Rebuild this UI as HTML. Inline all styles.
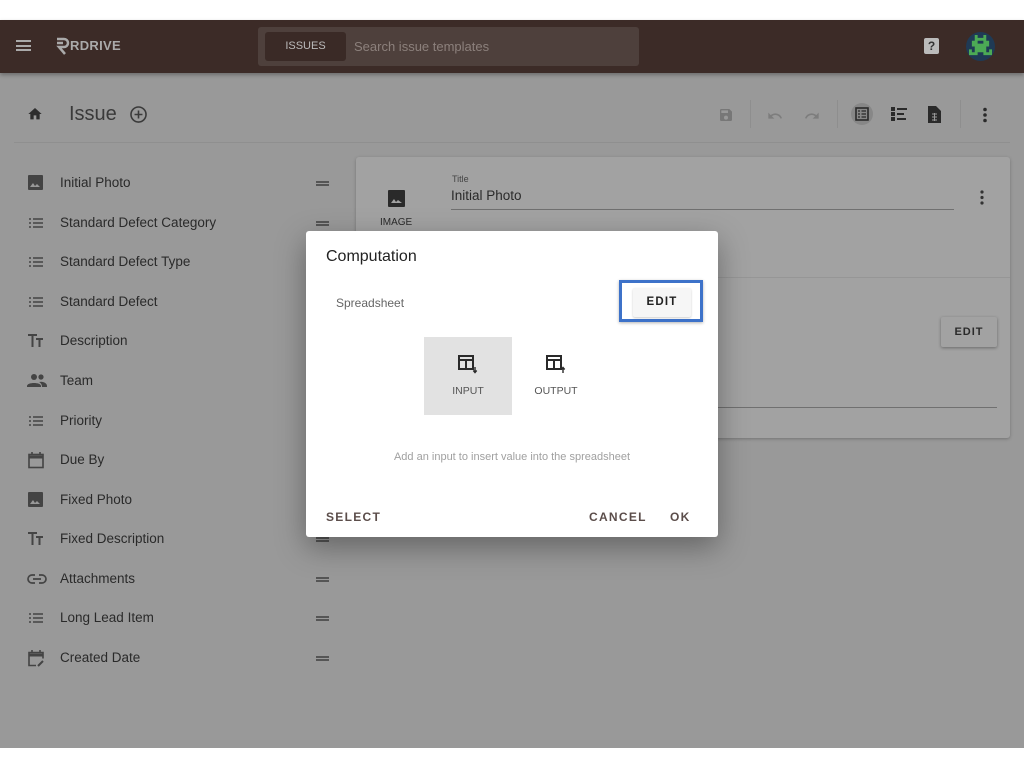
<!DOCTYPE html>
<html><head><meta charset="utf-8"><style>
*{box-sizing:border-box;margin:0;padding:0}
body{width:1024px;height:768px;background:#fff;font-family:"Liberation Sans",sans-serif;position:relative;overflow:hidden}
.page{position:absolute;left:0;top:20px;width:1024px;height:728px;background:#999}
.hdr{position:absolute;left:0;top:0;width:1024px;height:53px;background:#3c2b27;box-shadow:0 2px 4px rgba(0,0,0,.3)}
.abs{position:absolute}
.item{position:absolute;left:0;height:40px;width:340px}
.item .t{position:absolute;left:60px;top:0;font-size:13.5px;color:#2a2a2a;line-height:16px}
.item svg{position:absolute;left:27px;top:0}
.item .h{position:absolute;left:316px;top:6px;width:13px;height:5px;border-top:2px solid #555;border-bottom:2px solid #555}
.dlg{position:absolute;left:306px;top:211px;width:412px;height:306px;background:#fff;border-radius:3px;box-shadow:0 10px 30px rgba(0,0,0,.35)}
.btn{font-size:12px;letter-spacing:1.3px;color:#4a3a37;position:absolute;font-weight:bold;opacity:.9}
</style></head><body>
<div class="page">
 <div class="hdr">
  <div class="abs" style="left:16px;top:20px;width:15px;height:11px;border-top:2px solid #aaa;border-bottom:2px solid #aaa"><div style="margin-top:2.5px;height:2px;background:#aaa"></div></div>
  <svg class="abs" style="left:55px;top:16px" width="16" height="20" viewBox="0 0 16 20"><path d="M2 3h7a4 4 0 0 1 0 8H4l6 7" stroke="#aaa" stroke-width="2.5" fill="none"/><path d="M2 7h6" stroke="#aaa" stroke-width="2.5"/></svg>
  <div class="abs" style="left:70px;top:18px;font-size:13px;color:#aaa;font-weight:bold;letter-spacing:.3px">RDRIVE</div>
  <div class="abs" style="left:258px;top:7px;width:381px;height:39px;background:#4e403c;border-radius:3px"></div>
  <div class="abs" style="left:265px;top:12px;width:81px;height:29px;background:#3a2a26;border-radius:3px;color:#bbb;font-size:11px;text-align:center;line-height:29px">ISSUES</div>
  <div class="abs" style="left:354px;top:19px;font-size:13px;color:#8c807c">Search issue templates</div>
  <div class="abs" style="left:924px;top:18px;width:15px;height:16px;background:#bbb;border-radius:2px;font-size:12px;color:#333;text-align:center;line-height:16px;font-weight:bold">?</div>
  <div class="abs" style="left:966px;top:12px;width:29px;height:29px;border-radius:50%;background:#1f3a55"></div>
  <svg class="abs" style="left:969px;top:15px" width="23" height="23" viewBox="0 0 8 8"><path d="M2 0h1v1H2zM5 0h1v1H5zM2 1h4v1H2zM1 2h2v2H1zM5 2h2v2H5zM3 3h2v1H3zM2 4h4v2H2zM0 5h1v2H0zM7 5h1v2H7zM1 6h2v1H1zM5 6h2v1H5z" fill="#4caa55"/></svg>
 </div>
 <svg class="abs" style="left:27px;top:86px" width="16" height="16" viewBox="0 0 24 24"><path d="M10 20v-6h4v6h5v-8h3L12 3 2 12h3v8z" fill="#2e2e2e"/></svg>
 <div class="abs" style="left:69px;top:83px;font-size:20px;color:#3a3a3a">Issue</div>
 <svg class="abs" style="left:129px;top:85px" width="19" height="19" viewBox="0 0 24 24"><circle cx="12" cy="12" r="9.5" stroke="#3a3a3a" stroke-width="2" fill="none"/><path d="M12 7v10M7 12h10" stroke="#3a3a3a" stroke-width="2"/></svg>
 <div class="abs" style="left:14px;top:122px;width:996px;height:1px;background:#8f8f8f"></div>
 <svg class="abs" style="left:718px;top:87px" width="16" height="16" viewBox="0 0 24 24"><path d="M17 3H5a2 2 0 0 0-2 2v14a2 2 0 0 0 2 2h14a2 2 0 0 0 2-2V7zm-5 16a3 3 0 1 1 0-6 3 3 0 0 1 0 6zm3-10H5V5h10z" fill="#777"/></svg>
 <div class="abs" style="left:750px;top:80px;width:1px;height:28px;background:#8e8e8e"></div>
 <svg class="abs" style="left:766px;top:88px" width="18" height="16" viewBox="0 0 24 24"><path d="M12.5 8c-2.6 0-5 1-6.9 2.6L2 7v9h9l-3.6-3.6A8 8 0 0 1 20.2 16l2.4-.8A10.5 10.5 0 0 0 12.5 8z" fill="#7d7d7d"/></svg>
 <svg class="abs" style="left:803px;top:88px" width="18" height="16" viewBox="0 0 24 24"><path d="M11.5 8c2.6 0 5 1 6.9 2.6L22 7v9h-9l3.6-3.6A8 8 0 0 0 3.8 16l-2.4-.8A10.5 10.5 0 0 1 11.5 8z" fill="#7d7d7d"/></svg>
 <div class="abs" style="left:837px;top:80px;width:1px;height:28px;background:#8e8e8e"></div>
 <div class="abs" style="left:851px;top:83px;width:22px;height:22px;border-radius:50%;background:#878787"></div>
 <svg class="abs" style="left:855px;top:87px" width="14" height="14" viewBox="0 0 14 14"><rect x="1" y="1" width="12" height="12" fill="none" stroke="#2a2a2a" stroke-width="1.6"/><path d="M3 4h2M3 7h2M3 10h2M6.5 4h4.5M6.5 7h4.5M6.5 10h4.5" stroke="#2a2a2a" stroke-width="1.3"/></svg>
 <svg class="abs" style="left:891px;top:87px" width="17" height="14" viewBox="0 0 17 14"><path d="M0 0h4v4H0zM0 5h4v4H0zM0 10h4v4H0zM6 1h10v2H6zM6 6h7v2H6zM6 11h9v2H6z" fill="#2a2a2a"/></svg>
 <svg class="abs" style="left:928px;top:86px" width="13" height="17" viewBox="0 0 13 17"><path d="M0 0h8l5 5v12H0z" fill="#2a2a2a"/><path d="M4 8h5M4 11h5M4 14h5M6.5 7v8" stroke="#999" stroke-width="1"/></svg>
 <div class="abs" style="left:960px;top:80px;width:1px;height:28px;background:#8e8e8e"></div>
 <svg class="abs" style="left:982px;top:87px" width="6" height="16" viewBox="0 0 6 16"><circle cx="3" cy="2.5" r="1.8" fill="#2a2a2a"/><circle cx="3" cy="8" r="1.8" fill="#2a2a2a"/><circle cx="3" cy="13.5" r="1.8" fill="#2a2a2a"/></svg>

 <div class="item" style="top:155px"><svg width="18" height="16" viewBox="0 0 18 16"><rect x="1" y="0" width="15" height="15" rx="1" fill="#444"/><path d="M3 12l3-4 2 3 2-2 3 3z" fill="#999"/></svg><div class="t">Initial Photo</div><div class="h"></div></div>
 <div class="item" style="top:195px"><svg width="18" height="16" viewBox="0 0 18 16"><path d="M2 4h2M2 8h2M2 12h2M6 4h10M6 8h10M6 12h10" stroke="#444" stroke-width="1.6"/></svg><div class="t">Standard Defect Category</div><div class="h"></div></div>
 <div class="item" style="top:234px"><svg width="18" height="16" viewBox="0 0 18 16"><path d="M2 4h2M2 8h2M2 12h2M6 4h10M6 8h10M6 12h10" stroke="#444" stroke-width="1.6"/></svg><div class="t">Standard Defect Type</div><div class="h"></div></div>
 <div class="item" style="top:274px"><svg width="18" height="16" viewBox="0 0 18 16"><path d="M2 4h2M2 8h2M2 12h2M6 4h10M6 8h10M6 12h10" stroke="#444" stroke-width="1.6"/></svg><div class="t">Standard Defect</div><div class="h"></div></div>
 <div class="item" style="top:313px"><svg width="18" height="16" viewBox="0 0 18 16"><path d="M1 2h9M5.5 2v12M9 6h7M12.5 6v8" stroke="#444" stroke-width="2"/></svg><div class="t">Description</div><div class="h"></div></div>
 <div class="item" style="top:353px"><svg width="20" height="16" viewBox="0 0 20 16"><circle cx="7" cy="4" r="3" fill="#444"/><circle cx="14" cy="4" r="2.6" fill="#444"/><path d="M0 13c0-4 14-4 14 0v1H0zM12 9c4-1 8 1 8 4v1h-5c0-2-1-4-3-5z" fill="#444"/></svg><div class="t">Team</div><div class="h"></div></div>
 <div class="item" style="top:393px"><svg width="18" height="16" viewBox="0 0 18 16"><path d="M2 4h2M2 8h2M2 12h2M6 4h10M6 8h10M6 12h10" stroke="#444" stroke-width="1.6"/></svg><div class="t">Priority</div><div class="h"></div></div>
 <div class="item" style="top:432px"><svg width="18" height="17" viewBox="0 0 18 17"><rect x="2" y="2.5" width="14" height="13" fill="none" stroke="#444" stroke-width="1.6"/><path d="M2 5h14" stroke="#444" stroke-width="3"/><path d="M5 0v3M13 0v3" stroke="#444" stroke-width="1.6"/></svg><div class="t">Due By</div><div class="h"></div></div>
 <div class="item" style="top:472px"><svg width="18" height="16" viewBox="0 0 18 16"><rect x="1" y="0" width="15" height="15" rx="1" fill="#444"/><path d="M3 12l3-4 2 3 2-2 3 3z" fill="#999"/></svg><div class="t">Fixed Photo</div><div class="h"></div></div>
 <div class="item" style="top:511px"><svg width="18" height="16" viewBox="0 0 18 16"><path d="M1 2h9M5.5 2v12M9 6h7M12.5 6v8" stroke="#444" stroke-width="2"/></svg><div class="t">Fixed Description</div><div class="h"></div></div>
 <div class="item" style="top:551px"><svg width="20" height="16" viewBox="0 0 20 16"><path d="M8 4H5a4 4 0 0 0 0 8h3M12 4h3a4 4 0 0 1 0 8h-3M6 8h8" stroke="#444" stroke-width="1.7" fill="none"/></svg><div class="t">Attachments</div><div class="h"></div></div>
 <div class="item" style="top:590px"><svg width="18" height="16" viewBox="0 0 18 16"><path d="M2 4h2M2 8h2M2 12h2M6 4h10M6 8h10M6 12h10" stroke="#444" stroke-width="1.6"/></svg><div class="t">Long Lead Item</div><div class="h"></div></div>
 <div class="item" style="top:630px"><svg width="18" height="17" viewBox="0 0 18 17"><path d="M9 15.5H2v-13h14v6" fill="none" stroke="#444" stroke-width="1.6"/><path d="M2 5h14" stroke="#444" stroke-width="3"/><path d="M5 0v3M13 0v3" stroke="#444" stroke-width="1.6"/><path d="M11 16l5-5" stroke="#444" stroke-width="2"/></svg><div class="t">Created Date</div><div class="h"></div></div>

 <div class="abs" style="left:356px;top:137px;width:654px;height:281px;background:#a2a2a2;border-radius:3px;box-shadow:0 1px 3px rgba(0,0,0,.25)">
  <svg class="abs" style="left:32px;top:33px" width="17" height="17" viewBox="0 0 17 17"><rect width="17" height="17" rx="1" fill="#2a2a2a"/><path d="M3 13l3-4 2 3 2-2 4 3z" fill="#a2a2a2"/></svg>
  <div class="abs" style="left:24px;top:60px;font-size:10px;color:#2a2a2a">IMAGE</div>
  <div class="abs" style="left:96px;top:17px;font-size:9px;color:#444">Title</div>
  <div class="abs" style="left:95px;top:31px;font-size:13.5px;color:#2a2a2a">Initial Photo</div>
  <div class="abs" style="left:95px;top:52px;width:503px;height:1px;background:#707070"></div>
  <svg class="abs" style="left:623px;top:33px" width="6" height="15" viewBox="0 0 6 15"><circle cx="3" cy="2" r="1.6" fill="#333"/><circle cx="3" cy="7.5" r="1.6" fill="#333"/><circle cx="3" cy="13" r="1.6" fill="#333"/></svg>
  <div class="abs" style="left:0;top:120px;width:654px;height:1px;background:#969696"></div>
  <div class="abs" style="left:585px;top:160px;width:56px;height:30px;background:#a2a2a2;box-shadow:0 1px 3px rgba(0,0,0,.35);border-radius:2px;font-size:11px;letter-spacing:1px;color:#2a2a2a;text-align:center;line-height:30px;font-weight:bold">EDIT</div>
  <div class="abs" style="left:0;top:250px;width:641px;height:1px;background:#707070"></div>
 </div>

 <div class="dlg">
  <div class="abs" style="left:20px;top:17px;font-size:16px;color:#222">Computation</div>
  <div class="abs" style="left:30px;top:65px;font-size:12px;color:#666">Spreadsheet</div>
  <div class="abs" style="left:313px;top:49px;width:84px;height:42px;border:3px solid #3d72c9;box-shadow:0 1px 3px rgba(0,0,0,.3)"></div>
  <div class="abs" style="left:327px;top:57px;width:58px;height:29px;background:#f6f6f6;border-radius:2px;box-shadow:0 1px 2px rgba(0,0,0,.2);font-size:11.5px;letter-spacing:1.2px;color:#222;text-align:center;line-height:29px;font-weight:bold">EDIT</div>
  <div class="abs" style="left:118px;top:106px;width:88px;height:78px;background:#e2e2e2"></div>
  <svg class="abs" style="left:152px;top:124px" width="20" height="19" viewBox="0 0 20 19"><rect x="1" y="1" width="14" height="13" fill="none" stroke="#2a2a2a" stroke-width="2"/><path d="M1 5h14M8 5v9" stroke="#2a2a2a" stroke-width="2"/><path d="M17 12v5M15.3 15.5l1.7 2 1.7-2" stroke="#2a2a2a" stroke-width="1.4" fill="none"/></svg>
  <div class="abs" style="left:118px;top:154px;width:88px;text-align:center;font-size:10.5px;color:#555">INPUT</div>
  <svg class="abs" style="left:240px;top:124px" width="20" height="19" viewBox="0 0 20 19"><rect x="1" y="1" width="14" height="13" fill="none" stroke="#2a2a2a" stroke-width="2"/><path d="M1 5h14M8 5v9" stroke="#2a2a2a" stroke-width="2"/><path d="M17 18v-5M15.3 14.5l1.7-2 1.7 2" stroke="#2a2a2a" stroke-width="1.4" fill="none"/></svg>
  <div class="abs" style="left:206px;top:154px;width:88px;text-align:center;font-size:10.5px;color:#555">OUTPUT</div>
  <div class="abs" style="left:0;top:220px;width:412px;text-align:center;font-size:11px;color:#a0a0a0">Add an input to insert value into the spreadsheet</div>
  <div class="btn" style="left:20px;top:279px">SELECT</div>
  <div class="btn" style="left:283px;top:279px">CANCEL</div>
  <div class="btn" style="left:364px;top:279px">OK</div>
 </div>
</div>
</body></html>
